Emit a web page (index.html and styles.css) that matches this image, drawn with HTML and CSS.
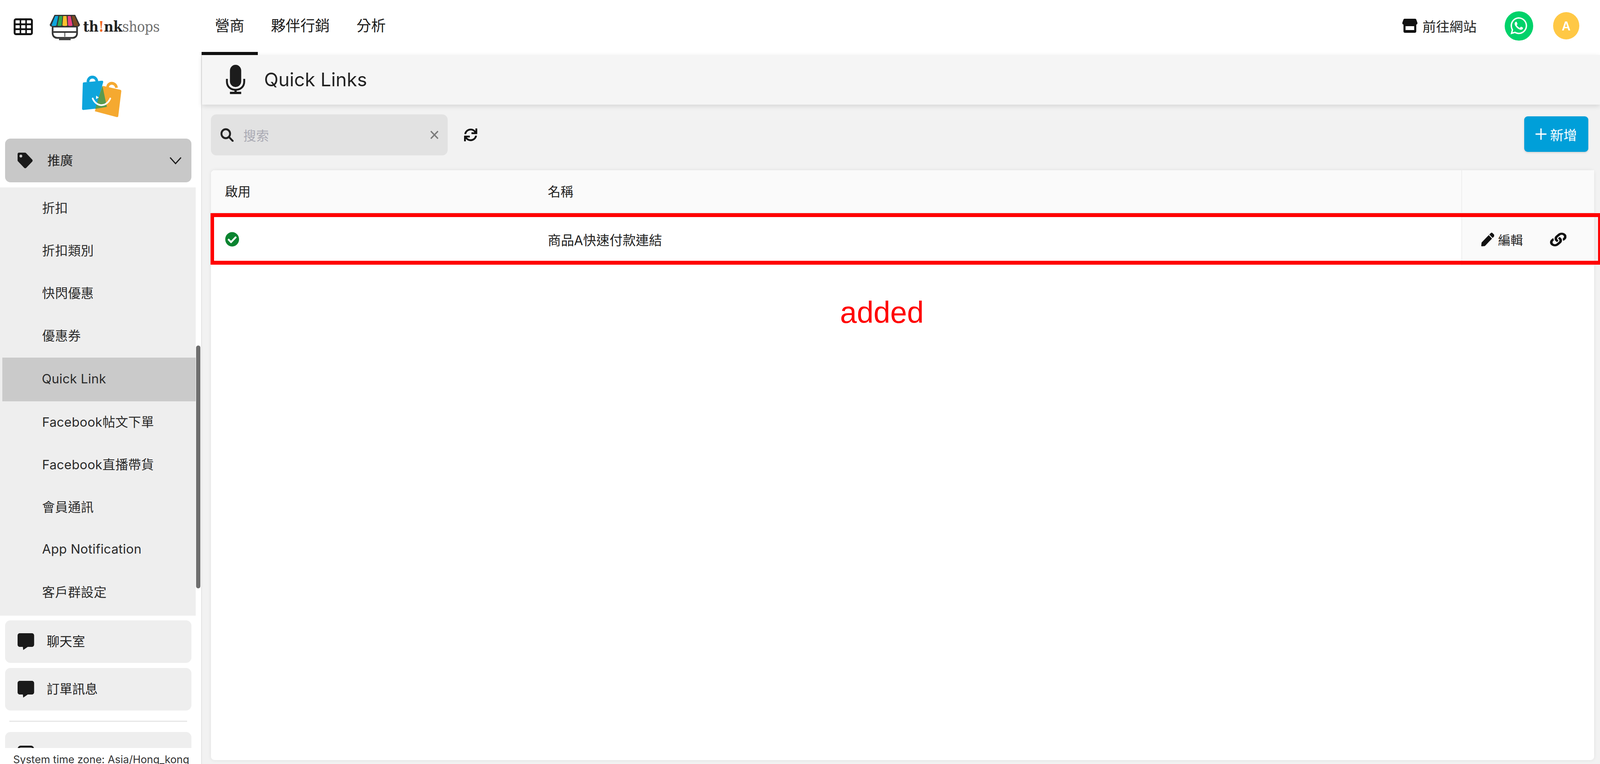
FILE: index.html
```html
<!DOCTYPE html>
<html lang="zh-Hant">
<head>
<meta charset="utf-8">
<title>Quick Links</title>
<link rel="stylesheet" href="styles.css">
</head>
<body>
<div class="app">
  <header class="topbar">
    <svg class="grid-icon" viewBox="0 0 51 43" preserveAspectRatio="none"><rect width="51" height="43" rx="6" fill="#111"/><g fill="#fff"><rect x="5" y="5" width="11" height="8" rx="1"/><rect x="20" y="5" width="11" height="8" rx="1"/><rect x="35" y="5" width="11" height="8" rx="1"/><rect x="5" y="17.500" width="11" height="8" rx="1"/><rect x="20" y="17.500" width="11" height="8" rx="1"/><rect x="35" y="17.500" width="11" height="8" rx="1"/><rect x="5" y="30" width="11" height="8" rx="1"/><rect x="20" y="30" width="11" height="8" rx="1"/><rect x="35" y="30" width="11" height="8" rx="1"/></g></svg>
    <svg class="brand-mark" viewBox="0 0 81 66" preserveAspectRatio="none">
      <path d="M8 31v17c0 8 6 12 12 12h41c6 0 12-4 12-12V31z" fill="#fff" stroke="#333" stroke-width="4.500"/>
      <path d="M10 45h61" stroke="#333" stroke-width="4"/>
      <path d="M40.500 45v12" stroke="#333" stroke-width="2"/>
      <rect x="25" y="60" width="31" height="6" fill="#444"/>
      <path d="M13 1h55l13 26-3 4H3l-3-4z" fill="#333"/>
      <path d="M15 4h8l-5 24c-2 2-11 2-13 0z" fill="#0ea5dc"/>
      <path d="M26 4h8l-2 24c-2 2-10 2-11 0z" fill="#2fa84f"/>
      <path d="M36 4h9l2 24c-2 2-11 2-13 0z" fill="#fbc02d"/>
      <path d="M48 4h8l5 24c-2 2-10 2-12 0z" fill="#ec3f7f"/>
      <path d="M59 4h7l11 24c-2 2-11 2-13 0z" fill="#7d4a1f"/>
    </svg>
    <div class="brand-name"><b>th</b><i>!</i><b>nk</b>shops</div>
    <nav class="tabs">
      <a class="tab tab-active">營商</a>
      <a class="tab">夥伴行銷</a>
      <a class="tab">分析</a>
    </nav>
    <div class="top-actions">
      <a class="site-link">
        <svg class="store-icon" viewBox="0 0 40 36" preserveAspectRatio="none"><path d="M6 0h28c1.500 0 2.500.8 3 2l3 8c.8 2.800-1 5-4 5H4c-3 0-4.800-2.200-4-5l3-8c.5-1.200 1.500-2 3-2z" fill="#111"/><path d="M3 13h34v19c0 2.500-1.500 4-4 4H7c-2.500 0-4-1.500-4-4z" fill="#111"/><rect x="8.500" y="19" width="23" height="10" fill="#fff"/></svg>
        <span>前往網站</span>
      </a>
      <span class="wa-badge">
        <svg class="wa-icon" viewBox="0 0 448 512" preserveAspectRatio="none"><path fill="#fff" d="M380.900 97.100C339 55.100 283.200 32 223.900 32c-122.400 0-222 99.600-222 222 0 39.100 10.200 77.300 29.600 111L0 480l117.700-30.900c32.400 17.700 68.900 27 106.100 27h.1c122.300 0 224.100-99.600 224.100-222 0-59.300-25.200-115-67.100-157zm-157 341.600c-33.200 0-65.700-8.900-94-25.700l-6.700-4-69.800 18.300L72 359.200l-4.400-7c-18.500-29.400-28.200-63.300-28.200-98.200 0-101.700 82.800-184.500 184.600-184.500 49.300 0 95.600 19.200 130.400 54.100 34.800 34.900 56.200 81.200 56.100 130.500 0 101.800-84.900 184.600-186.600 184.600zm101.200-138.200c-5.500-2.800-32.800-16.200-37.900-18-5.100-1.900-8.800-2.800-12.500 2.800-3.700 5.600-14.300 18-17.600 21.800-3.200 3.700-6.500 4.200-12 1.400-32.600-16.300-54-29.100-75.500-66-5.700-9.800 5.700-9.100 16.300-30.300 1.800-3.700.9-6.900-.5-9.700-1.400-2.800-12.500-30.100-17.100-41.200-4.500-10.800-9.100-9.300-12.500-9.500-3.200-.2-6.900-.2-10.600-.2-3.700 0-9.700 1.400-14.800 6.900-5.100 5.600-19.400 19-19.400 46.300 0 27.300 19.900 53.700 22.600 57.400 2.800 3.700 39.100 59.700 94.800 83.800 35.200 15.200 49 16.500 66.600 13.900 10.700-1.600 32.800-13.400 37.400-26.400 4.600-13 4.600-24.100 3.200-26.400-1.300-2.500-5-3.900-10.500-6.600z"/></svg>
      </span>
      <span class="avatar">A</span>
    </div>
  </header>

  <div class="workspace">
    <aside class="sidebar">
      <div class="side-scroller">
        <div class="side-logo">
          <svg class="bag-logo" viewBox="0 0 450 420" preserveAspectRatio="none">
            <path d="M125 105c0-50 70-50 72 0" fill="none" stroke="#0ea5dc" stroke-width="22"/>
            <path d="M282 145c2-42 68-40 70 5" fill="none" stroke="#f5a930" stroke-width="22"/>
            <path d="M92 108l146-13c6 0 9 4 9 10l-60 205-100 10c-6 0-9-4-9-10l6-192c0-6 3-10 8-10z" fill="#0ea5dc"/>
            <path d="M245 135l138 30c6 2 9 6 8 12l-24 190c-1 6-5 9-11 8l-176-45z" fill="#f5a930"/>
            <path d="M240 132l36 164-93 16z" fill="#5a9a4e"/>
            <path d="M163 232c30 68 110 68 140 0" fill="none" stroke="#fff" stroke-width="13" stroke-linecap="round"/>
            <path d="M190 210l22 14-22 12z" fill="#fff"/>
          </svg>
        </div>

        <a class="side-item side-item-open">
          <svg class="ico-tag" viewBox="0 0 512 512" preserveAspectRatio="none"><path fill="#1a1a1a" d="M0 252.118V48C0 21.490 21.490 0 48 0h204.118a48 48 0 0 1 33.941 14.059l211.882 211.882c18.745 18.745 18.745 49.137 0 67.882L293.823 497.941c-18.745 18.745-49.137 18.745-67.882 0L14.059 286.059A48 48 0 0 1 0 252.118zM112 64c-26.510 0-48 21.490-48 48s21.490 48 48 48 48-21.490 48-48-21.490-48-48-48z"/></svg>
          <span>推廣</span>
          <svg class="ico-chevron" viewBox="0 0 32 19" preserveAspectRatio="none"><path d="M1.500 1.500L16 17 30.500 1.500" fill="none" stroke="#1a1a1a" stroke-width="3"/></svg>
        </a>

        <div class="submenu">
          <a class="sub-item">折扣</a>
          <a class="sub-item">折扣類別</a>
          <a class="sub-item">快閃優惠</a>
          <a class="sub-item">優惠券</a>
          <a class="sub-item sub-item-active">Quick Link</a>
          <a class="sub-item">Facebook帖文下單</a>
          <a class="sub-item">Facebook直播帶貨</a>
          <a class="sub-item">會員通訊</a>
          <a class="sub-item">App Notification</a>
          <a class="sub-item">客戶群設定</a>
        </div>

        <a class="side-item side-item-chat">
          <svg class="ico-chat" viewBox="0 0 44 43" preserveAspectRatio="none"><path d="M6 0h32c3.500 0 6 2.500 6 6v23c0 3.500-2.500 6-6 6H27L15 43l-1-8H6c-3.500 0-6-2.500-6-6V6c0-3.500 2.500-6 6-6z" fill="#1a1a1a"/></svg>
          <span>聊天室</span>
        </a>
        <a class="side-item side-item-order">
          <svg class="ico-chat" viewBox="0 0 44 43" preserveAspectRatio="none"><path d="M6 0h32c3.500 0 6 2.500 6 6v23c0 3.500-2.500 6-6 6H27L15 43l-1-8H6c-3.500 0-6-2.500-6-6V6c0-3.500 2.500-6 6-6z" fill="#1a1a1a"/></svg>
          <span>訂單訊息</span>
        </a>
        <hr class="side-rule">
        <a class="side-item side-item-pages">
          <svg class="ico-chat" viewBox="0 0 44 43" preserveAspectRatio="none"><rect x="2.500" y="2.500" width="39" height="38" rx="6" fill="none" stroke="#1a1a1a" stroke-width="5"/></svg>
          <span>頁面</span>
        </a>
      </div>
      <div class="side-foot">System time zone: Asia/Hong_kong</div>
      <div class="side-scroll"></div>
    </aside>

    <main class="content">
      <div class="page-head">
        <svg class="ico-mic" viewBox="0 0 52 75" preserveAspectRatio="none"><rect x="11" y="0" width="30" height="57" rx="15" fill="#1c1c1c"/><path d="M3 36v7c0 13 10 21 23 21s23-8 23-21v-7" fill="none" stroke="#1c1c1c" stroke-width="5"/><rect x="23" y="62" width="6" height="9" fill="#1c1c1c"/><rect x="11" y="69" width="30" height="6" rx="1" fill="#1c1c1c"/></svg>
        <h1 class="page-title">Quick Links</h1>
      </div>

      <div class="toolbar">
        <div class="search">
          <svg class="ico-search" viewBox="0 0 35 35" preserveAspectRatio="none"><circle cx="14.500" cy="14.500" r="11.500" fill="none" stroke="#222" stroke-width="5"/><path d="M23 23l10 10" stroke="#222" stroke-width="5" stroke-linecap="round"/></svg>
          <span class="search-hint">搜索</span>
          <svg class="ico-clear" viewBox="0 0 23 23" preserveAspectRatio="none"><path d="M2 2l19 19M21 2L2 21" stroke="#7a7a7a" stroke-width="3.500"/></svg>
        </div>
        <svg class="ico-sync" viewBox="0 0 512 512" preserveAspectRatio="none"><path fill="#111" d="M440.650 12.570l4 82.770A247.160 247.160 0 0 0 255.830 8C134.730 8 33.910 94.920 12.290 209.820A12 12 0 0 0 24.090 224h49.050a12 12 0 0 0 11.670-9.260 175.910 175.910 0 0 1 317-56.940l-101.460-4.860a12 12 0 0 0-12.570 12v47.410a12 12 0 0 0 12 12H500a12 12 0 0 0 12-12V12a12 12 0 0 0-12-12h-47.370a12 12 0 0 0-11.980 12.570zM255.830 432a175.610 175.610 0 0 1-146-77.800l101.800 4.870a12 12 0 0 0 12.570-12v-47.400a12 12 0 0 0-12-12H12a12 12 0 0 0-12 12V500a12 12 0 0 0 12 12h47.350a12 12 0 0 0 12-12.600l-4.150-82.570A247.170 247.170 0 0 0 255.830 504c121.110 0 221.930-86.920 243.550-201.820a12 12 0 0 0-11.800-14.180h-49.050a12 12 0 0 0-11.670 9.260A175.860 175.860 0 0 1 255.830 432z"/></svg>
        <button class="add-btn" type="button">
          <svg class="ico-plus" viewBox="0 0 29 29" preserveAspectRatio="none"><path d="M14.500 0v29M0 14.500h29" stroke="#fff" stroke-width="3.500"/></svg>
          <span>新增</span>
        </button>
      </div>

      <section class="card">
        <div class="table-head">
          <div class="cell cell-on">啟用</div>
          <div class="cell cell-name">名稱</div>
          <div class="cell cell-act"></div>
        </div>
        <div class="table-row">
          <div class="cell cell-on">
            <svg class="ico-check" viewBox="0 0 512 512" preserveAspectRatio="none"><path fill="#0a8430" d="M504 256c0 136.967-111.033 248-248 248S8 392.967 8 256 119.033 8 256 8s248 111.033 248 248zM227.314 387.314l184-184c6.248-6.248 6.248-16.379 0-22.627l-22.627-22.627c-6.248-6.249-16.379-6.249-22.628 0L216 308.118l-70.059-70.059c-6.248-6.248-16.379-6.248-22.628 0l-22.627 22.627c-6.248 6.248-6.248 16.379 0 22.627l104 104c6.249 6.249 16.379 6.249 22.628.001z"/></svg>
          </div>
          <div class="cell cell-name">商品A快速付款連結</div>
          <div class="cell cell-act">
            <svg class="ico-pencil" viewBox="0 0 512 512" preserveAspectRatio="none"><path fill="#111" d="M290.740 93.240l128.020 128.020-277.990 277.990-114.140 12.600C11.350 513.540-1.560 500.620.14 485.340l12.700-114.220 277.900-277.880zm207.200-19.060l-60.110-60.110c-18.750-18.750-49.160-18.750-67.910 0l-56.550 56.550 128.020 128.020 56.550-56.550c18.750-18.760 18.750-49.160 0-67.910z"/></svg>
            <span class="edit-label">編輯</span>
            <svg class="ico-link" viewBox="0 0 512 512" preserveAspectRatio="none"><path fill="#111" d="M326.612 185.391c59.747 59.809 58.927 155.698.36 214.590-.11.120-.24.250-.36.370l-67.200 67.200c-59.270 59.270-155.699 59.262-214.960 0-59.270-59.260-59.270-155.700 0-214.960l37.106-37.106c9.840-9.840 26.786-3.300 27.294 10.606.648 17.722 3.826 35.527 9.690 52.721 1.986 5.822.567 12.262-3.783 16.612l-13.087 13.087c-28.026 28.026-28.905 73.660-1.155 101.960 28.024 28.579 74.086 28.749 102.325.510l67.200-67.190c28.191-28.191 28.073-73.757 0-101.830-3.701-3.694-7.429-6.564-10.341-8.569a16.037 16.037 0 0 1-6.947-12.606c-.396-10.567 3.348-21.456 11.698-29.806l21.054-21.055c5.521-5.521 14.182-6.199 20.584-1.731a152.482 152.482 0 0 1 20.522 17.197zM467.547 44.449c-59.261-59.262-155.690-59.270-214.960 0l-67.200 67.200c-.12.120-.25.250-.36.370-58.566 58.892-59.387 154.781.36 214.590a152.454 152.454 0 0 0 20.521 17.196c6.402 4.468 15.064 3.789 20.584-1.731l21.054-21.055c8.350-8.350 12.094-19.239 11.698-29.806a16.037 16.037 0 0 0-6.947-12.606c-2.912-2.005-6.640-4.875-10.341-8.569-28.073-28.073-28.191-73.639 0-101.830l67.200-67.190c28.239-28.239 74.300-28.069 102.325.510 27.750 28.300 26.872 73.934-1.155 101.960l-13.087 13.087c-4.350 4.350-5.769 10.790-3.783 16.612 5.864 17.194 9.042 34.999 9.690 52.721.509 13.906 17.454 20.446 27.294 10.606l37.106-37.106c59.271-59.259 59.271-155.699.001-214.959z"/></svg>
          </div>
        </div>
        <div class="note-box"></div>
        <div class="note-text">added</div>
      </section>
    </main>
  </div>
</div>
</body>
</html>
```

FILE: styles.css
```css
/* Horizontal measures are fractions of a 4253-unit-wide design, so the page
   keeps its proportions whatever width the window really has. */
:root { --x: calc(100vw / 4253); }

* { box-sizing: border-box; }
html, body { margin: 0; height: 100%; overflow: hidden; background: #fff; }
body { font-family: Inter, "Noto Sans CJK TC", sans-serif; color: #222; }
a { color: inherit; text-decoration: none; }
svg { display: block; flex: none; }

.app { display: grid; grid-template-rows: 141px 1fr; height: 100vh; width: 100%; overflow: hidden; }

/* top bar */
.topbar { display: flex; align-items: center; background: #fff; padding-left: calc(var(--x) * 36); padding-right: calc(var(--x) * 55); }
.grid-icon { width: calc(var(--x) * 51); height: 43px; margin-top: -5px; }
.brand-mark { width: calc(var(--x) * 81); height: 66px; margin-left: calc(var(--x) * 45); margin-top: -1px; }
.brand-name { width: calc(var(--x) * 204); margin-left: calc(var(--x) * 8); margin-top: -4px; font-family: "DejaVu Serif Condensed", "DejaVu Serif", serif; font-size: calc(var(--x) * 39); letter-spacing: calc(var(--x) * -.6); color: #6f6f6f; line-height: 1; white-space: nowrap; }
.brand-name b { color: #222; font-weight: 700; }
.brand-name i { color: #f26a21; font-style: normal; font-weight: 700; }
.tabs { display: flex; align-self: stretch; margin-left: calc(var(--x) * 111); }
.tab { display: flex; align-items: center; padding: 0 calc(var(--x) * 35.5) 8px; font-size: calc(var(--x) * 39); color: #1c1c1c; border-bottom: 8px solid transparent; }
.tab-active { border-bottom-color: #111; }
.top-actions { display: flex; align-items: center; margin-left: auto; margin-top: -9px; }
.site-link { display: flex; align-items: center; gap: calc(var(--x) * 13); font-size: calc(var(--x) * 36); color: #222; }
.store-icon { width: calc(var(--x) * 40); height: 36px; }
.wa-badge { display: flex; align-items: center; justify-content: center; width: calc(var(--x) * 75); height: 75px; border-radius: 50%; background: #00d26a; margin-left: calc(var(--x) * 75); }
.wa-icon { width: calc(var(--x) * 44); height: 50px; }
.avatar { display: flex; align-items: center; justify-content: center; width: calc(var(--x) * 70); height: 70px; border-radius: 50%; background: #ffc845; color: #fff; font-size: calc(var(--x) * 32); font-weight: 600; margin-left: calc(var(--x) * 53); }

.workspace { display: flex; min-height: 0; }

/* sidebar */
.sidebar { position: relative; display: flex; flex-direction: column; width: calc(var(--x) * 537); flex: none; border-right: calc(var(--x) * 3) solid #e2e2e2; background: #fff; overflow: hidden; }
.side-scroller { flex: 1; min-height: 0; overflow: hidden; }
.side-logo { height: 214px; display: flex; align-items: center; justify-content: center; padding-bottom: 6px; }
.bag-logo { width: calc(var(--x) * 150); height: 140px; }
.side-item { display: flex; align-items: center; height: 109px; margin: 0 calc(var(--x) * 26) 0 calc(var(--x) * 13); padding-left: calc(var(--x) * 34); border-radius: 14px; background: #eee; font-size: calc(var(--x) * 34); color: #222; }
.side-item span { padding-bottom: 6px; }
.side-item-open { height: 112px; background: #c8c8c8; padding-right: calc(var(--x) * 26); }
.side-item-open span { margin-left: calc(var(--x) * 39); }
.side-item-chat { margin-top: 12px; }
.side-item-chat span, .side-item-order span, .side-item-pages span { margin-left: calc(var(--x) * 33); }
.side-item-order { margin-top: 13px; }
.side-item-pages { height: 112px; }
.ico-tag { width: calc(var(--x) * 40); height: 40px; }
.ico-chevron { width: calc(var(--x) * 32); height: 19px; margin-left: auto; }
.ico-chat { width: calc(var(--x) * 44); height: 43px; }
.submenu { width: calc(var(--x) * 520); height: 1097px; margin-top: 13px; background: #eee; padding-bottom: 4px; }
.sub-item { display: flex; align-items: center; height: 109px; padding-left: calc(var(--x) * 112); padding-bottom: 8px; font-size: calc(var(--x) * 34); letter-spacing: calc(var(--x) * .3); color: #2a2a2a; white-space: nowrap; }
.sub-item-active { height: 112px; margin-left: calc(var(--x) * 6); padding-left: calc(var(--x) * 105); padding-bottom: 5px; background: #cacaca; }
.side-rule { height: 3px; border: 0; margin: 26px calc(var(--x) * 38) 26px calc(var(--x) * 25); background: #e6e6e6; }
.side-scroll { position: absolute; left: calc(var(--x) * 521); top: 744px; width: calc(var(--x) * 12); height: 622px; border-radius: 6px; background: #6e6e6e; }
.side-foot { flex: none; height: 41px; padding: 12px 0 0 calc(var(--x) * 35); background: #fff; font-size: calc(var(--x) * 28); line-height: 36px; color: #333; white-space: nowrap; overflow: hidden; }

/* main */
.content { flex: 1; min-width: 0; display: flex; flex-direction: column; background: #f2f2f2; }
.page-head { display: flex; align-items: center; flex: none; height: 127px; padding-left: calc(var(--x) * 63); padding-bottom: 3px; background: #f5f5f5; box-shadow: 0 4px 12px rgba(0,0,0,.12); position: relative; }
.ico-mic { width: calc(var(--x) * 52); height: 75px; }
.page-title { margin: 0 0 0 calc(var(--x) * 50); font-size: calc(var(--x) * 50); font-weight: 400; color: #222; }
.toolbar { display: flex; align-items: flex-start; flex: none; margin: 25px calc(var(--x) * 31) 38px calc(var(--x) * 24); height: 105px; }
.search { display: flex; align-items: center; width: calc(var(--x) * 629); height: 105px; padding: 0 calc(var(--x) * 24) 0 calc(var(--x) * 25); border-radius: 14px; background: #e2e2e2; }
.ico-search { width: calc(var(--x) * 35); height: 35px; }
.search-hint { margin-left: calc(var(--x) * 26); font-size: calc(var(--x) * 34); color: #a9a9b3; }
.ico-clear { width: calc(var(--x) * 23); height: 23px; margin-left: auto; }
.ico-sync { width: calc(var(--x) * 35); height: 33px; margin: 36px 0 0 calc(var(--x) * 44); }
.add-btn { display: flex; align-items: center; justify-content: center; gap: calc(var(--x) * 9); width: calc(var(--x) * 170); height: 91px; margin: 5px 0 0 auto; border: 0; border-radius: 9px; background: #009fd9; color: #fff; font: inherit; font-size: calc(var(--x) * 36); box-shadow: 0 2px 4px rgba(0,0,0,.15); }
.ico-plus { width: calc(var(--x) * 29); height: 29px; }

.card { position: relative; flex: 1; margin: 0 calc(var(--x) * 16) 10px calc(var(--x) * 24); border-radius: 9px; background: #fff; box-shadow: 0 0 10px rgba(0,0,0,.08); }
.table-head, .table-row { display: grid; grid-template-columns: calc(var(--x) * 858) 1fr calc(var(--x) * 353); }
.table-head { height: 110px; background: #fafafa; border-radius: 9px 9px 0 0; border-bottom: 2px solid #eee; }
.table-row { height: 134px; }
.cell { display: flex; align-items: center; font-size: calc(var(--x) * 34); color: #222; }
.table-head .cell { padding-bottom: 4px; }
.cell-on { padding-left: calc(var(--x) * 37); }
.cell-name { padding-left: calc(var(--x) * 37); white-space: nowrap; }
.table-row .cell-name { font-size: calc(var(--x) * 35); }
.cell-act { padding-left: calc(var(--x) * 51); background: #fafafa; border-left: calc(var(--x) * 3) solid #eee; }
.ico-check { width: calc(var(--x) * 38); height: 38px; }
.ico-pencil { width: calc(var(--x) * 35); height: 35px; }
.edit-label { margin-left: calc(var(--x) * 10); font-size: calc(var(--x) * 33); }
.ico-link { width: calc(var(--x) * 44); height: 35px; margin-left: calc(var(--x) * 72); }

/* red annotation laid over the table */
.note-box { position: absolute; left: calc(var(--x) * -1); top: 110px; right: calc(var(--x) * -20); height: 132px; border-style: solid; border-color: #f00; border-width: 10px calc(var(--x) * 10); }
.note-text { position: absolute; left: calc(var(--x) * 1672); top: 326px; font-family: "Liberation Sans", sans-serif; font-size: calc(var(--x) * 80); line-height: 1; color: #f00; }
```
